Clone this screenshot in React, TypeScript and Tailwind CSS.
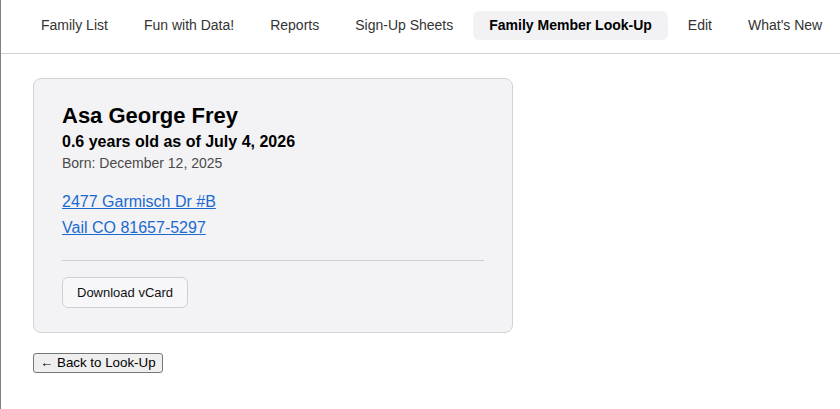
const navItems = ['Family List', 'Fun with Data!', 'Reports', 'Sign-Up Sheets', 'Family Member Look-Up', 'Edit', "What's New"];

export default function App() {
  const active = 'Family Member Look-Up';

  return (
    <div className="min-h-[409px] bg-white border-l border-[#808080] font-['Liberation_Sans',Arial,sans-serif] text-[#111]">
      <nav className="flex gap-1 pl-6 pt-[11px] pb-[13px] border-b border-[#d0d0d0]">
        {navItems.map(item => (
          <a
            key={item}
            href="#"
            className={`px-4 py-[6px] text-[14px] leading-[17px] rounded-md whitespace-nowrap ${
              item === active ? 'bg-[#f2f2f4] font-bold text-black' : 'text-[#333]'
            }`}
          >
            {item}
          </a>
        ))}
      </nav>

      <main className="px-8 pt-6">
        <div className="w-[480px] bg-[#f3f3f5] border border-[#d4d4d8] rounded-lg px-7 pt-6 pb-6">
          <h1 className="text-[22px] leading-[26px] font-bold text-black">Asa George Frey</h1>
          <p className="mt-[2px] text-[16px] leading-[22px] font-bold text-black">0.6 years old as of July 4, 2026</p>
          <p className="text-[14px] leading-5 text-[#4a4a4a]">Born: December 12, 2025</p>

          <div className="mt-4 text-[16px] leading-[26px]">
            <a href="#" className="block w-fit text-[#1a6ad0] underline">2477 Garmisch Dr #B</a>
            <a href="#" className="block w-fit text-[#1a6ad0] underline">Vail CO 81657-5297</a>
          </div>

          <div className="mt-[19px] border-t border-[#cfcfd3] pt-4">
            <button className="px-[14px] py-[7px] text-[13px] leading-[15px] text-[#111] bg-[#f7f7f9] border border-[#d0d0d4] rounded-md">
              Download vCard
            </button>
          </div>
        </div>

        <button className="mt-5 px-[6px] py-px text-[13.33px] leading-[16px] text-black bg-[#efefef] border border-[#767676] rounded-[3px]">
          ← Back to Look-Up
        </button>
      </main>
    </div>
  );
}
